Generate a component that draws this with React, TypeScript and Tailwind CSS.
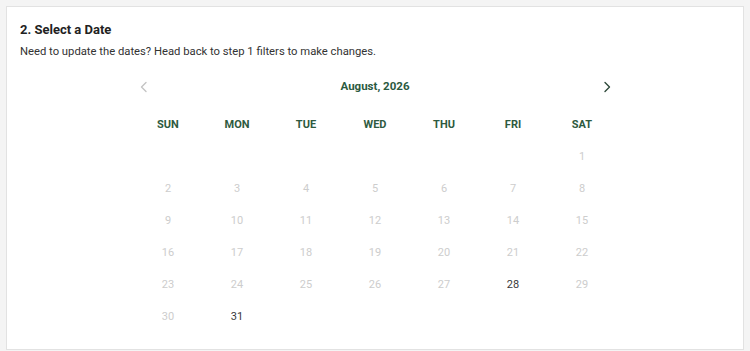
import React from 'react';

const days = ['SUN', 'MON', 'TUE', 'WED', 'THU', 'FRI', 'SAT'];

// August 2026 starts on a Saturday
const cells: (number | null)[] = [...Array(6).fill(null), ...Array.from({ length: 31 }, (_, i) => i + 1)];
const available = [28, 31];

function Chevron({ dir, className }: { dir: 'left' | 'right'; className: string }) {
  return (
    <svg width="10" height="12" viewBox="0 0 10 12" className={className}>
      <path
        d={dir === 'left' ? 'M7 1.5 L2.5 6 L7 10.5' : 'M3 1.5 L7.5 6 L3 10.5'}
        fill="none"
        stroke="currentColor"
        strokeWidth="1.4"
        strokeLinecap="round"
        strokeLinejoin="round"
      />
    </svg>
  );
}

export default function App() {
  return (
    <div className="min-h-[351px] bg-[#f4f4f4] pt-[6px] px-[6px] pb-[2px]" style={{ fontFamily: 'Roboto, "Liberation Sans", sans-serif' }}>
      <div className="bg-white border border-[#e2e2e2] pt-[14px] px-[13px] pb-[16px]">
        <h2 className="text-[13px] leading-[18px] font-bold text-[#222]">2. Select a Date</h2>
        <p className="text-[11.25px] leading-[16px] text-[#333] mt-[5px]">
          Need to update the dates? Head back to step 1 filters to make changes.
        </p>

        <div className="w-[483px] mx-auto mt-[15px]">
          <div className="flex items-center justify-between h-[24px] px-[5px]">
            <Chevron dir="left" className="text-[#c4c4c4]" />
            <span className="text-[11.5px] font-bold text-[#2b5a3f]">August, 2026</span>
            <Chevron dir="right" className="text-[#2f4a3c]" />
          </div>

          <div className="grid grid-cols-7 mt-[10px]">
            {days.map((d) => (
              <div key={d} className="h-[32px] flex items-center justify-center text-[11px] font-bold text-[#2e5a40]">
                {d}
              </div>
            ))}
            {cells.map((n, i) => (
              <div
                key={i}
                className={`h-[32px] flex items-center justify-center text-[11px] ${
                  n && available.includes(n) ? 'text-[#3a3a3a]' : 'text-[#cdcdcd]'
                }`}
              >
                {n ?? ''}
              </div>
            ))}
          </div>
        </div>
      </div>
    </div>
  );
}
